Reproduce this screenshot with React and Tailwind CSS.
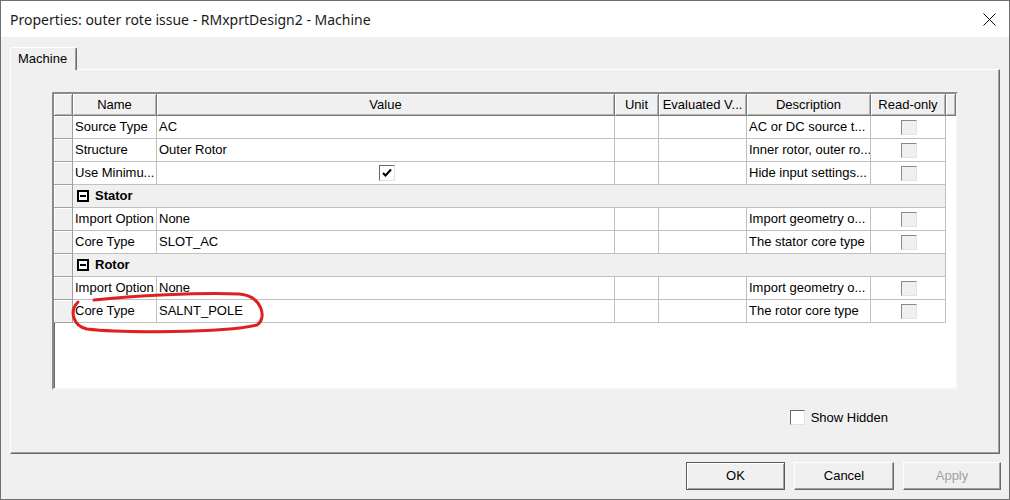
import { Fragment } from "react";

const rows = [
  { type: "row", name: "Source Type", value: "AC", desc: "AC or DC source t..." },
  { type: "row", name: "Structure", value: "Outer Rotor", desc: "Inner rotor, outer ro..." },
  { type: "row", name: "Use Minimu...", check: true, desc: "Hide input settings..." },
  { type: "group", name: "Stator" },
  { type: "row", name: "Import Option", value: "None", desc: "Import geometry o..." },
  { type: "row", name: "Core Type", value: "SLOT_AC", desc: "The stator core type" },
  { type: "group", name: "Rotor" },
  { type: "row", name: "Import Option", value: "None", desc: "Import geometry o..." },
  { type: "row", name: "Core Type", value: "SALNT_POLE", desc: "The rotor core type" },
];

const headCell =
  "h-full flex items-center justify-center bg-[#f0f0f0] border-r border-b border-[#7a7a7a] shadow-[inset_1px_1px_0_#ffffff,inset_-1px_-1px_0_#b4b4b4] whitespace-nowrap overflow-hidden";

const dataCell =
  "h-full flex items-center pl-[2px] border-r border-b border-[#c0c0c0] whitespace-nowrap overflow-hidden";

const RowHead = () => (
  <div className="w-[19px] h-full bg-[#f0f0f0] border-r border-b border-[#a0a0a0] shadow-[inset_1px_1px_0_#ffffff]" />
);

const DisabledBox = () => (
  <div className="w-[16px] h-[15px] bg-[#f0f0f0] border-t border-l border-t-[#8a8a8a] border-l-[#8a8a8a] border-r border-b border-r-[#e3e3e3] border-b-[#e3e3e3]" />
);

const CheckedBox = () => (
  <div className="w-[16px] h-[16px] bg-white border-t border-l border-t-[#696969] border-l-[#696969] border-r border-b border-r-[#e3e3e3] border-b-[#e3e3e3] flex items-center justify-center">
    <svg width="12" height="12" viewBox="0 0 12 12">
      <path d="M2 6 L4.5 8.5 L10 2.5" fill="none" stroke="#000" strokeWidth="2" />
    </svg>
  </div>
);

const App = () => {
  return (
    <div className="relative w-[1010px] h-[500px] bg-[#f0f0f0] border border-[#6f6f6f] flex flex-col text-[13px] text-black font-['Liberation_Sans',Arial,sans-serif]">
      {/* Title bar */}
      <div className="h-[36px] bg-white flex items-center justify-between pl-[9px] pr-[13px]">
        <span className="text-[14px] font-['Noto_Sans',sans-serif] text-[#1a1a1a]">
          Properties: outer rote issue - RMxprtDesign2 - Machine
        </span>
        <svg width="13" height="13" viewBox="0 0 13 13">
          <path d="M0.5 0.5 L12.5 12.5 M12.5 0.5 L0.5 12.5" stroke="#000" strokeWidth="1" />
        </svg>
      </div>

      {/* Tab */}
      <div className="mt-[10px] ml-[9px] flex">
        <div className="relative z-10 -mb-[1px] h-[23px] w-[67px] bg-[#f0f0f0] border-t border-l border-t-white border-l-white border-r border-r-[#696969] shadow-[inset_-1px_0_0_#a0a0a0] rounded-t-[2px] flex items-center pl-[7px]">
          Machine
        </div>
      </div>

      {/* Panel */}
      <div className="ml-[9px] w-[990px] h-[385px] border border-t-white border-l-white border-r-[#696969] border-b-[#696969] shadow-[inset_-1px_-1px_0_#a0a0a0] pl-[41px] pt-[22px] flex flex-col">
        <div className="w-[906px] h-[298px] bg-white border-2 border-t-[#8a8a8a] border-l-[#8a8a8a] border-r-[#f4f4f4] border-b-[#f4f4f4] shadow-[inset_1px_1px_0_#696969]">
          {/* Header */}
          <div className="flex h-[22px]">
            <div className={`${headCell} w-[19px]`} />
            <div className={`${headCell} w-[84px]`}>Name</div>
            <div className={`${headCell} w-[458px]`}>Value</div>
            <div className={`${headCell} w-[44px]`}>Unit</div>
            <div className={`${headCell} w-[88px]`}>Evaluated V...</div>
            <div className={`${headCell} w-[124px]`}>Description</div>
            <div className={`${headCell} w-[75px]`}>Read-only</div>
            <div className={`${headCell} flex-1`} />
          </div>

          {rows.map((r, i) => (
            <Fragment key={i}>
              {r.type === "group" ? (
                <div className="flex h-[23px]">
                  <RowHead />
                  <div className="w-[873px] h-full bg-[#f0f0f0] border-r border-b border-[#c0c0c0] flex items-center pl-[4px] gap-[6px] font-bold">
                    <div className="w-[12px] h-[12px] border-2 border-black bg-white flex items-center justify-center">
                      <div className="w-[6px] h-[2px] bg-black" />
                    </div>
                    {r.name}
                  </div>
                </div>
              ) : (
                <div className="flex h-[23px]">
                  <RowHead />
                  <div className={`${dataCell} w-[84px]`}>{r.name}</div>
                  <div className={`${dataCell} w-[458px] ${r.check ? "justify-center pl-0" : ""}`}>
                    {r.check ? <CheckedBox /> : r.value}
                  </div>
                  <div className={`${dataCell} w-[44px]`} />
                  <div className={`${dataCell} w-[88px]`} />
                  <div className={`${dataCell} w-[124px]`}>{r.desc}</div>
                  <div className={`${dataCell} w-[75px] justify-center pl-0`}>
                    <DisabledBox />
                  </div>
                </div>
              )}
            </Fragment>
          ))}
        </div>

        {/* Show hidden */}
        <div className="mt-[18px] flex justify-end pr-[111px] items-center gap-[6px]">
          <div className="w-[15px] h-[15px] bg-white border-t border-l border-t-[#696969] border-l-[#696969] border-r border-b border-r-[#e3e3e3] border-b-[#e3e3e3]" />
          <span>Show Hidden</span>
        </div>
      </div>

      {/* Buttons */}
      <div className="mt-[8px] flex justify-end gap-[9px] pr-[8px]">
        <button className="w-[99px] h-[28px] bg-[#f0f0f0] border border-[#5a5a5a] shadow-[inset_1px_1px_0_#ffffff,inset_-1px_-1px_0_#a0a0a0]">
          OK
        </button>
        <button className="w-[100px] h-[28px] bg-[#f0f0f0] border border-t-white border-l-white border-r-[#696969] border-b-[#696969] shadow-[inset_-1px_-1px_0_#a0a0a0]">
          Cancel
        </button>
        <button className="w-[98px] h-[28px] bg-[#f0f0f0] text-[#a0a0a0] border border-t-white border-l-white border-r-[#696969] border-b-[#696969] shadow-[inset_-1px_-1px_0_#a0a0a0]">
          Apply
        </button>
      </div>

      {/* Red annotation */}
      <svg
        className="absolute inset-0 pointer-events-none"
        width="1010"
        height="500"
        viewBox="0 0 1010 500"
      >
        <path
          d="M93 299 C 130 295, 200 291, 238 293 C 262 295, 266 318, 256 324 C 222 332, 120 332, 86 328 C 72 325, 68 310, 77 301"
          fill="none"
          stroke="#e02020"
          strokeWidth="3"
          strokeLinecap="round"
        />
      </svg>
    </div>
  );
};

export default App;
